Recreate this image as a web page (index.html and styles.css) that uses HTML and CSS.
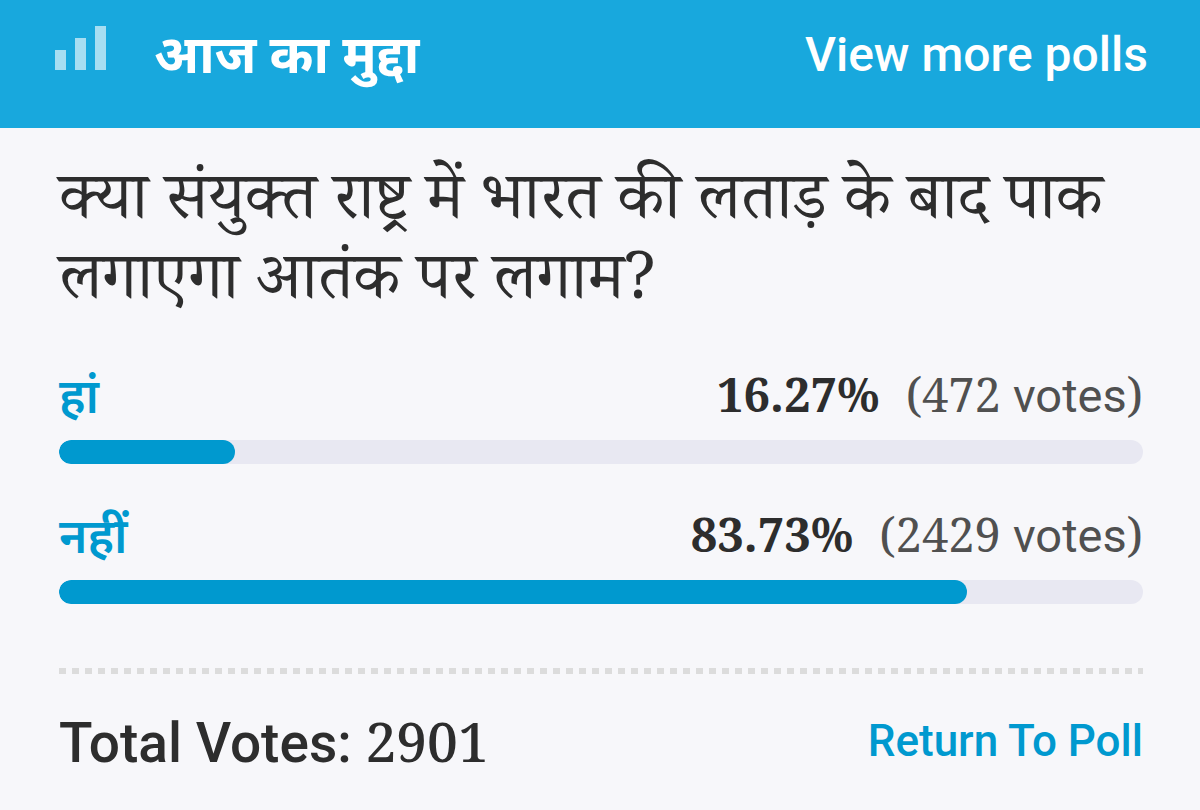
FILE: index.html
```html
<!DOCTYPE html>
<html lang="hi">
<head>
    <meta charset="UTF-8">
    <meta name="viewport" content="width=device-width, initial-scale=1.0">
    <title>आज का मुद्दा</title>
    <link rel="stylesheet" href="styles.css">
</head>
<body>

    <header class="poll-header">
        <svg class="poll-icon" viewBox="0 0 51 44" aria-hidden="true">
            <rect x="0" y="24" width="11" height="20"></rect>
            <rect x="20" y="12" width="11" height="32"></rect>
            <rect x="40" y="0" width="11" height="44"></rect>
        </svg>
        <h1>आज का मुद्दा</h1>
        <a href="/polls" class="more-link">View more polls</a>
    </header>

    <main class="poll">
        <h2 class="question">क्या संयुक्त राष्ट्र में भारत की लताड़ के बाद पाक लगाएगा आतंक पर लगाम?</h2>

        <div class="option">
            <div class="option-info">
                <h3>हां</h3>
                <p><strong>16.27%</strong><span class="votes">(472 <span class="unit">votes</span>)</span></p>
            </div>
            <div class="bar">
                <div class="bar-fill" style="width: 16.27%"></div>
            </div>
        </div>

        <div class="option">
            <div class="option-info">
                <h3>नहीं</h3>
                <p><strong>83.73%</strong><span class="votes">(2429 <span class="unit">votes</span>)</span></p>
            </div>
            <div class="bar">
                <div class="bar-fill" style="width: 83.73%"></div>
            </div>
        </div>

        <hr class="divider">

        <footer class="poll-footer">
            <p class="total">Total Votes: <span class="number">2901</span></p>
            <a href="/poll" class="return-link">Return To Poll</a>
        </footer>
    </main>

</body>
</html>
```
FILE: styles.css
```css
body {
    font-family: Roboto, "Noto Sans", sans-serif;
    margin: 0;
    background-color: #f7f7fa;
    color: #2d2d2d;
}

h1, h2, h3, p {
    margin: 0;
}

a {
    text-decoration: none;
}

.poll-header {
    display: flex;
    align-items: flex-start;
    padding: 26px 52px 44px 55px;
    background-color: #18a8dd;
    color: #fff;
}

.poll-icon {
    width: 51px;
    height: 44px;
    margin-right: 48px;
    fill: #a6def2;
}

.poll-header h1 {
    font-size: 53px;
    line-height: 58px;
}

.more-link {
    margin-left: auto;
    color: #fff;
    font-size: 48px;
    font-weight: 500;
    line-height: 58px;
}

.poll {
    padding: 24px 57px 32px 59px;
}

.question {
    font-family: "Noto Serif", "Noto Serif Devanagari", "Noto Sans", serif;
    font-size: 66px;
    font-weight: 400;
    line-height: 80px;
    margin-bottom: 48px;
}

.option {
    margin-bottom: 36px;
}

.option-info {
    display: flex;
    justify-content: space-between;
    align-items: center;
    height: 68px;
    padding-bottom: 12px;
}

.option-info h3 {
    color: #0099cf;
    font-size: 48px;
    font-weight: 600;
}

.option-info p {
    font-family: "Noto Serif", "DejaVu Serif", serif;
    font-size: 47px;
}

.votes {
    margin-left: 26px;
    color: #505050;
}

.unit {
    font-family: Roboto, sans-serif;
}

.bar {
    height: 24px;
    border-radius: 12px;
    background-color: #e8e8f2;
    overflow: hidden;
}

.bar-fill {
    height: 100%;
    border-radius: 12px;
    background-color: #0099cf;
}

.divider {
    height: 6px;
    margin: 64px 0 32px;
    border: none;
    background: repeating-linear-gradient(90deg, #dcdcdc 0 7px, transparent 7px 13px);
}

.poll-footer {
    display: flex;
    justify-content: space-between;
    line-height: 70px;
}

.total {
    font-size: 55px;
    font-weight: 500;
}

.number {
    font-family: "Noto Serif", "DejaVu Serif", serif;
}

.return-link {
    color: #0099cf;
    font-size: 44px;
    font-weight: 500;
}
```
